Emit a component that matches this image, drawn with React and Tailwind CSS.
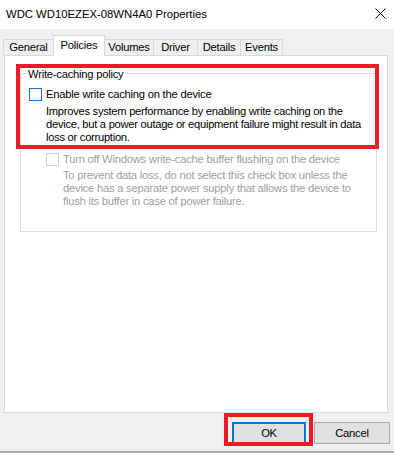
import { useState } from "react";

const font = { fontFamily: '"Liberation Sans", Arial, sans-serif' };

const tabs = [
    { name: "General", w: "w-[51px]" },
    { name: "Policies", w: "w-[52px]" },
    { name: "Volumes", w: "w-[50px]" },
    { name: "Driver", w: "w-[45px]" },
    { name: "Details", w: "w-[44px]" },
    { name: "Events", w: "w-[43px]" },
];

const Checkbox = ({ disabled }) => (
    <div
        className={`w-[13px] h-[13px] shrink-0 bg-white border ${disabled ? "border-[#cccccc]" : "border-[#1a73c9]"}`}
    />
);

export default function App() {
    const [active] = useState("Policies");

    return (
        <div
            className="w-[394px] h-[453px] flex flex-col bg-[#f0f0f0] text-[11.2px] tracking-[-0.22px] text-black overflow-hidden whitespace-nowrap"
            style={font}
        >
            {/* title bar */}
            <div className="h-[29px] shrink-0 bg-white flex items-center justify-between pl-[6px] pr-[8px]">
                <span className="text-[11.3px] tracking-normal leading-[14px] pb-[2px]">
                    WDC WD10EZEX-08WN4A0 Properties
                </span>
                <svg width="11" height="11" viewBox="0 0 11 11" className="mb-[2px]">
                    <path d="M0.5 0.5 L10.5 10.5 M10.5 0.5 L0.5 10.5" stroke="#000" strokeWidth="1" />
                </svg>
            </div>

            {/* tabs */}
            <div className="h-[26px] shrink-0 flex items-end pl-[3px] relative z-10">
                {tabs.map((t, i) => {
                    const sel = t.name === active;
                    return (
                        <div
                            key={t.name}
                            className={`${t.w} ${i > 0 ? "-ml-px" : ""} border-l border-r border-t border-[#d9d9d9] flex justify-center ${
                                sel
                                    ? "h-[21px] bg-white relative z-10 -mb-px pt-[2px] leading-[14px]"
                                    : "h-[16px] leading-[15px]"
                            }`}
                        >
                            {t.name}
                        </div>
                    );
                })}
            </div>

            {/* panel */}
            <div className="h-[358px] shrink-0 ml-[4px] mr-[6px] bg-white border border-[#d9d9d9] pt-[17px]">
                <div className="relative ml-[15px] mr-[10px]">
                    <div className="border border-[#dcdcdc] pt-[14px] pl-[8px] pb-[23px]">
                        <div className="flex items-start gap-[4px]">
                            <Checkbox />
                            <span className="leading-[13px]">Enable write caching on the device</span>
                        </div>
                        <div className="pl-[17px] mt-[4px] leading-[13px] tracking-[-0.28px]">
                            Improves system performance by enabling write caching on the
                            <br />
                            device, but a power outage or equipment failure might result in data
                            <br />
                            loss or corruption.
                        </div>

                        <div className="pl-[17px] mt-[9px] text-[#a0a0a0]">
                            <div className="flex items-start gap-[4px]">
                                <Checkbox disabled />
                                <span className="leading-[13px]">
                                    Turn off Windows write-cache buffer flushing on the device
                                </span>
                            </div>
                            <div className="pl-[17px] mt-[3px] leading-[13px]">
                                To prevent data loss, do not select this check box unless the
                                <br />
                                device has a separate power supply that allows the device to
                                <br />
                                flush its buffer in case of power failure.
                            </div>
                        </div>
                    </div>

                    <span className="absolute left-[7px] -top-[5px] px-[1px] bg-white leading-[13px]">
                        Write-caching policy
                    </span>

                    {/* annotation */}
                    <div className="absolute -left-[4px] -top-[9px] -right-[2px] h-[85px] border-4 border-[#ed1c24] pointer-events-none" />
                </div>
            </div>

            {/* buttons */}
            <div className="flex-1 flex justify-end items-start gap-[8px] pt-[9px] pr-[4px]">
                <div className="relative">
                    <button className="w-[74px] h-[22px] bg-[#e1e1e1] border-2 border-[#0078d7] leading-[18px]">
                        OK
                    </button>
                    <div className="absolute -left-[8px] -top-[9px] -right-[7px] -bottom-[2px] border-4 border-[#ed1c24] pointer-events-none" />
                </div>
                <button className="w-[76px] h-[22px] bg-[#e1e1e1] border border-[#adadad] leading-[20px]">
                    Cancel
                </button>
            </div>

            <div className="h-[2px] shrink-0 bg-[#ababab]" />
        </div>
    );
}
